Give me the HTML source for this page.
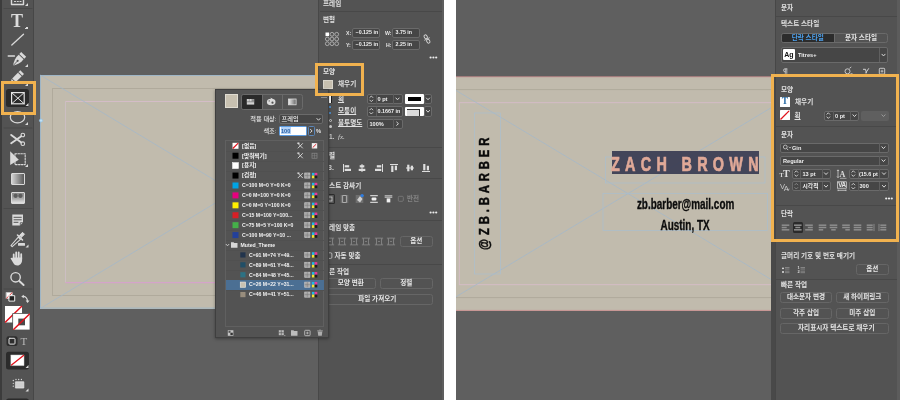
<!DOCTYPE html>
<html lang="ko"><head><meta charset="utf-8"><title>InDesign</title>
<style>
html,body{margin:0;padding:0;background:#fff;}
body{width:900px;height:400px;position:relative;overflow:hidden;font-family:"Liberation Sans","Noto Sans CJK KR",sans-serif;}
div{position:absolute;box-sizing:border-box;}
svg{position:absolute;overflow:visible;}
.t{white-space:nowrap;}
.pane{overflow:hidden;background:#5f5f5f;will-change:transform;}
.f{background:#464646;border:1px solid #6a6a6a;border-radius:2px;}
.btn{border:1px solid #666;border-radius:2.5px;background:#535353;color:#e6e6e6;font-size:6.6px;font-weight:700;text-align:center;}
.sep{height:1px;background:#484848;}
</style></head><body>

<div class="pane" style="left:0;top:0;width:444px;height:400px;">
<div style="left:40px;top:75px;width:388px;height:233.6px;background:#c1bbad;"></div>
<svg style="left:0;top:0" width="444" height="400" viewBox="0 0 444 400">
<rect x="52.5" y="88.5" width="363" height="207" fill="none" stroke="#b0aa9c" stroke-width="1"/>
<path d="M65.5 101.5V282.500M402.500 101.500V282.500" fill="none" stroke="#cdbec4" stroke-width="0.900"/><path d="M65.500 101.500H402.500" fill="none" stroke="#d6bcc9" stroke-width="0.900"/><path d="M65.500 282.700H402.500" fill="none" stroke="#db9ed0" stroke-width="1"/>
<rect x="40.5" y="75.5" width="387" height="232.6" fill="none" stroke="#9fb6c6" stroke-width="1"/>
<line x1="40" y1="75" x2="428" y2="308.6" stroke="#a0b8cd" stroke-width="0.7"/>
<line x1="40" y1="308.6" x2="428" y2="75" stroke="#a0b8cd" stroke-width="0.7"/>
<circle cx="41" cy="120.5" r="1.6" fill="#bfe0f5" stroke="#8fc3e8" stroke-width="0.6"/>
</svg>
<div style="left:0px;top:0px;width:34px;height:400px;background:#535353;border-left:2px solid #3c3c3c;border-right:1px solid #474747;"></div>
<svg id="tools" style="left:0;top:0" width="40" height="400" viewBox="0 0 40 400" fill="none" stroke="#dadada" stroke-width="1.3" stroke-linecap="round" stroke-linejoin="round">
<rect x="11.5" y="-4" width="12" height="8.5" stroke-width="1.4"/><path d="M14.5 1.5h1M17.3 1.5h1M20 1.5h1" stroke-width="1.2"/><path d="M28 3L28 6L25 6Z" fill="#dadada" stroke="none"/>
<line x1="4" y1="8.5" x2="32" y2="8.5" stroke="#494949" stroke-width="1"/>
<line x1="4" y1="128" x2="32" y2="128" stroke="#494949" stroke-width="1"/>
<line x1="4" y1="208.5" x2="32" y2="208.5" stroke="#494949" stroke-width="1"/>
<line x1="4" y1="289" x2="32" y2="289" stroke="#494949" stroke-width="1"/>
<line x1="11.8" y1="45" x2="23.5" y2="34.3" stroke-width="1.3"/>
<path d="M8.2 56h6.300" stroke-width="1.300"/><g transform="translate(18.200,60.200) rotate(43)"><rect x="-3.400" y="-8" width="6.800" height="2.700" fill="#dadada" stroke="none"/><path d="M-3.300 -4.300H3.300C4 0 2.200 4.300 0 7.600C-2.200 4.300 -4 0 -3.300 -4.300Z" fill="#dadada" stroke="none"/><path d="M0 7.600V1.500" stroke="#535353" stroke-width="0.800"/><circle cx="0" cy="0.800" r="1.050" fill="#535353" stroke="none"/></g><path d="M28 64L28 67L25 67Z" fill="#dadada" stroke="none"/>
<g transform="translate(16.500,77.800) rotate(45)"><rect x="-2.600" y="-8" width="5.200" height="11.500" fill="#dadada" stroke="none"/><path d="M-2.600 4.300h5.200L0 8.500z" fill="#dadada" stroke="none"/><rect x="-2.600" y="-5.600" width="5.200" height="0.900" fill="#535353" stroke="none"/></g><path d="M28 83L28 86L25 86Z" fill="#dadada" stroke="none"/>
</svg>
<div style="left:6px;top:88.5px;width:23px;height:18.5px;background:#2b2b2b;border-radius:2.5px;"></div>
<svg style="left:0;top:0" width="40" height="400" viewBox="0 0 40 400" fill="none" stroke="#e4e4e4" stroke-width="1.2">
<rect x="11.6" y="92.6" width="12.6" height="11.2"/><path d="M11.6 92.6l12.6 11.2M24.2 92.6l-12.6 11.2" stroke-width="1"/><path d="M28.5 103L28.5 106L25.5 106Z" fill="#dadada" stroke="none"/>
</svg>
<svg style="left:0;top:0" width="40" height="400" viewBox="0 0 40 400" fill="none" stroke="#dadada" stroke-width="1.3" stroke-linecap="round" stroke-linejoin="round">
<ellipse cx="17.5" cy="117.3" rx="7.2" ry="5.6" stroke-width="1.2"/><path d="M28 122L28 125L25 125Z" fill="#dadada" stroke="none"/>
<g transform="translate(17.5,139.5)"><path d="M-6.300 -4.600L3.800 3M-6.300 3.700L3.800 -3.300" stroke-width="1.900"/><circle cx="5.3" cy="-4.5" r="1.8" stroke-width="1.1"/><circle cx="5.3" cy="4.2" r="1.8" stroke-width="1.1"/></g>
<g><path d="M10.200 151.200V165L18.800 159.800Z" fill="#dadada" stroke="none"/><rect x="15" y="153.800" width="10.200" height="10.800" stroke-dasharray="1.600 1.300" stroke-width="1.100"/></g><path d="M28 164L28 167L25 167Z" fill="#dadada" stroke="none"/>
</svg>
<div style="left:11px;top:173px;width:13.5px;height:11.5px;background:linear-gradient(90deg,#d2d2d2,#5a5a5a);border:1px solid #dadada;border-radius:1px;"></div>
<div style="left:11px;top:192px;width:13.5px;height:12px;background:radial-gradient(circle at 30% 28%,#5c5c5c 0,#5c5c5c 1.6px,transparent 2.6px),radial-gradient(circle at 70% 28%,#5c5c5c 0,#5c5c5c 1.6px,transparent 2.6px),linear-gradient(180deg,#8a8a8a 0%,#a4a4a4 50%,#e2e2e2 100%);border:1px solid #dadada;border-radius:1px;"></div>
<svg style="left:0;top:0" width="40" height="400" viewBox="0 0 40 400" fill="none" stroke="#dadada" stroke-width="1.3" stroke-linecap="round" stroke-linejoin="round">
<path d="M12.3 214.5h10.7v8l-3 3h-7.7z" fill="#dadada" stroke="none"/><path d="M14 217.3h7.3M14 219.8h7.3M14 222.3h4" stroke="#535353" stroke-width="1"/><path d="M20.3 225.3v-2.6h2.6" stroke="#535353" stroke-width="0.8"/>
<g transform="translate(17.5,240)"><path d="M-6.5 5.5l7.3-8.3 2.2 2.2-8.3 7.3z" stroke-width="1.1"/><path d="M2 -4.5l3-3.2 2 2-3.2 3z" fill="#dadada" stroke-width="1"/><path d="M0 -5l5 5" stroke-width="1.6"/><rect x="0.5" y="3" width="7" height="2.8" rx="0.5" fill="#dadada" stroke="none"/></g><path d="M28.5 244.5L28.5 247.5L25.5 247.5Z" fill="#dadada" stroke="none"/>
<g transform="translate(17.5,259)"><path d="M-3.8 0v-4.6M-1.3 -0.5v-6M1.2 -0.5v-6M3.7 0v-4.8" stroke-width="1.8"/><path d="M-5 -1.5h9.6v2.5c0 3-2 5.5-4.6 5.5s-3.4-1-4.5-3l-2.5-4.200c1-1 2-0.500 2.600 0.300z" fill="#dadada" stroke="none"/></g>
<circle cx="15.6" cy="277.3" r="4.7" stroke-width="1.4"/><path d="M19.3 281l4.3 4" stroke-width="1.9"/>
<path d="M22.5 296.5c3-0.300 5 1.500 5 5" stroke-width="1.2"/><path d="M21.300 296.600l2.500-1.900v3.600z" fill="#dadada" stroke="none"/><path d="M27.600 303l-1.900-2.500h3.800z" fill="#dadada" stroke="none"/>
<rect x="6.3" y="292.500" width="6" height="6" fill="#fff" stroke="#ddd" stroke-width="0.5"/><path d="M6.500 298.300l5.600-5.600" stroke="#e02020" stroke-width="0.9"/><rect x="9.300" y="295.700" width="5.400" height="5.400" fill="#222" stroke="#eee" stroke-width="1"/>
<rect x="5" y="306" width="17" height="16.500" fill="#fff" stroke="none"/><path d="M5.500 322L21.500 306.500" stroke="#e0121c" stroke-width="1.500"/>
<rect x="13" y="313.500" width="17" height="16.500" fill="#fff" stroke="#535353" stroke-width="0.8"/><rect x="18.300" y="318.600" width="6.700" height="6.700" fill="#4a4a4a" stroke="none"/><path d="M13.800 329.300L29.300 314.300" stroke="#e0121c" stroke-width="1.500"/>
<rect x="6.500" y="336.300" width="11" height="9.800" rx="2" fill="#2d2d2d" stroke="none"/><rect x="9" y="338.300" width="6" height="5.800" rx="0.800" stroke="#e0e0e0" stroke-width="1"/>
<rect x="6" y="351.700" width="23" height="17.800" rx="2.500" fill="#2b2b2b" stroke="none"/><rect x="11" y="355" width="13" height="10.600" fill="#fff" stroke="#ccc" stroke-width="0.500"/><path d="M11.500 365L23.500 355.500" stroke="#e0121c" stroke-width="1.300"/><path d="M28.5 365L28.5 368L25.5 368Z" fill="#dadada" stroke="none"/>
<rect x="15.800" y="381.800" width="8" height="6.200" fill="#cfcfcf" stroke="#e6e6e6" stroke-width="0.800"/><path d="M13.300 380.500v0.010M13.300 383.300v0.010M13.300 386.200v0.010M16 379.500h0.010M18.700 379.500h0.010M21.400 379.500h0.010" stroke-width="1.300"/><path d="M28.5 388.5L28.5 391.5L25.5 391.5Z" fill="#dadada" stroke="none"/>
<rect x="6" y="398.500" width="23" height="6" rx="2.500" fill="#2b2b2b" stroke="none"/>
</svg>
<div class="t" style="left:11.1px;top:10.8px;font-size:18px;color:#dcdcdc;font-weight:700;line-height:20px;height:20px;white-space:nowrap;font-family:&quot;Liberation Serif&quot;,serif;">T</div>
<div style="left:25.3px;top:25.5px;width:3px;height:3px;background:linear-gradient(135deg,transparent 50%,#dadada 50%);"></div>
<div class="t" style="left:20.5px;top:334.5px;font-size:11px;color:#b9b9b9;font-weight:400;line-height:13px;height:13px;white-space:nowrap;font-family:&quot;Liberation Serif&quot;,serif;">T</div>
<div style="left:1px;top:81px;width:35px;height:33.5px;border:3px solid #f1b24f;"></div>
<div style="left:318px;top:0px;width:126px;height:400px;background:#535353;border-left:1px solid #484848;border-right:2px solid #5e5e5e;"></div>
<div class="t" style="left:323px;top:-1.5px;font-size:6.6px;color:#e2e2e2;font-weight:700;line-height:10px;height:10px;white-space:nowrap;">프레임</div>
<div class="sep" style="left:320px;top:11.2px;width:122px;height:1px;"></div>
<div class="t" style="left:323px;top:14.5px;font-size:6.6px;color:#e2e2e2;font-weight:700;line-height:10px;height:10px;white-space:nowrap;">변형</div>
<svg style="left:0;top:0" width="444" height="400" viewBox="0 0 444 400" ><rect x="325.5" y="32.5" width="3.6" height="3.6" fill="#fff"/><circle cx="332.0" cy="34.3" r="1.9" fill="none" stroke="#bcbcbc" stroke-width="0.8"/><circle cx="336.7" cy="34.3" r="1.9" fill="none" stroke="#bcbcbc" stroke-width="0.8"/><circle cx="327.3" cy="39.0" r="1.9" fill="none" stroke="#bcbcbc" stroke-width="0.8"/><circle cx="332.0" cy="39.0" r="1.9" fill="none" stroke="#bcbcbc" stroke-width="0.8"/><circle cx="336.7" cy="39.0" r="1.9" fill="none" stroke="#bcbcbc" stroke-width="0.8"/><circle cx="327.3" cy="43.699999999999996" r="1.9" fill="none" stroke="#bcbcbc" stroke-width="0.8"/><circle cx="332.0" cy="43.699999999999996" r="1.9" fill="none" stroke="#bcbcbc" stroke-width="0.8"/><circle cx="336.7" cy="43.699999999999996" r="1.9" fill="none" stroke="#bcbcbc" stroke-width="0.8"/></svg>
<div class="t" style="left:346px;top:27.5px;font-size:5.2px;color:#e4e4e4;font-weight:700;line-height:10px;height:10px;white-space:nowrap;">X:</div>
<div class="f" style="left:352px;top:28px;width:27.5px;height:9.5px;"><div class="t" style="left:2.6px;top:-1px;height:9.5px;line-height:9.5px;font-size:5.3px;font-weight:700;color:#f0f0f0;">−0.125 in</div></div>
<div class="t" style="left:385px;top:27.5px;font-size:5.2px;color:#e4e4e4;font-weight:700;line-height:10px;height:10px;white-space:nowrap;">W:</div>
<div class="f" style="left:392px;top:28px;width:27.5px;height:9.5px;"><div class="t" style="left:2.6px;top:-1px;height:9.5px;line-height:9.5px;font-size:5.3px;font-weight:700;color:#f0f0f0;">3.75 in</div></div>
<div class="t" style="left:346px;top:39.5px;font-size:5.2px;color:#e4e4e4;font-weight:700;line-height:10px;height:10px;white-space:nowrap;">Y:</div>
<div class="f" style="left:352px;top:40px;width:27.5px;height:9.5px;"><div class="t" style="left:2.6px;top:-1px;height:9.5px;line-height:9.5px;font-size:5.3px;font-weight:700;color:#f0f0f0;">−0.125 in</div></div>
<div class="t" style="left:386px;top:39.5px;font-size:5.2px;color:#e4e4e4;font-weight:700;line-height:10px;height:10px;white-space:nowrap;">H:</div>
<div class="f" style="left:392px;top:40px;width:27.5px;height:9.5px;"><div class="t" style="left:2.6px;top:-1px;height:9.5px;line-height:9.5px;font-size:5.3px;font-weight:700;color:#f0f0f0;">2.25 in</div></div>
<svg style="left:0;top:0" width="444" height="400" viewBox="0 0 444 400" ><g transform="translate(427,39) rotate(-30)" fill="none" stroke="#d8d8d8" stroke-width="0.9"><rect x="-1.4" y="-4.6" width="2.8" height="4" rx="1.4"/><rect x="-1.4" y="0.6" width="2.8" height="4" rx="1.4"/><path d="M-3 -0.2l6 0.4" stroke-width="0.8"/></g></svg>
<svg style="left:0;top:0" width="444" height="400" viewBox="0 0 444 400" ><circle cx="430.6" cy="57.5" r="1.1" fill="#ececec"/><circle cx="433.40000000000003" cy="57.5" r="1.1" fill="#ececec"/><circle cx="436.20000000000005" cy="57.5" r="1.1" fill="#ececec"/></svg>
<div class="t" style="left:323px;top:66.5px;font-size:6.6px;color:#e2e2e2;font-weight:700;line-height:10px;height:10px;white-space:nowrap;">모양</div>
<div style="left:323px;top:80px;width:9.5px;height:9px;background:#c6bfaf;border:1px solid #d9d5cb;"></div>
<div class="t" style="left:338px;top:79.2px;font-size:6.6px;color:#e2e2e2;font-weight:700;line-height:10px;height:10px;white-space:nowrap;">채우기</div>
<div style="left:327px;top:93.8px;width:4.6px;height:9.6px;background:#fff;border-right:1.400px solid #1c1c1c;"></div>
<div class="t" style="left:338px;top:93.8px;font-size:6.6px;color:#e2e2e2;font-weight:700;line-height:10px;height:10px;white-space:nowrap;text-decoration:underline;text-decoration-thickness:0.6px;text-underline-offset:1.3px;">획</div>
<div class="f" style="left:367px;top:93.5px;width:35.5px;height:10.5px;"></div>
<div style="left:375.5px;top:94px;width:1px;height:9.5px;background:#5e5e5e;"></div>
<div style="left:392.5px;top:94px;width:1px;height:9.5px;background:#5e5e5e;"></div>
<div class="t" style="left:377.5px;top:93.7px;font-size:5.6px;color:#f0f0f0;font-weight:700;line-height:10px;height:10px;white-space:nowrap;">0 pt</div>
<div style="left:405px;top:94px;width:18.5px;height:9.5px;background:#fff;border-radius:1px;"></div>
<div style="left:408px;top:97.2px;width:12.5px;height:3.4px;background:#000;"></div>
<div class="f" style="left:424px;top:93.5px;width:8px;height:10.5px;"></div>
<div style="left:328.7px;top:105.8px;width:2.6px;height:2.6px;background:#4d98e4;border-radius:50%;"></div>
<div style="left:328.7px;top:111.5px;width:2.6px;height:2.6px;background:#4d98e4;border-radius:50%;"></div>
<div class="t" style="left:338px;top:106px;font-size:6.6px;color:#e2e2e2;font-weight:700;line-height:10px;height:10px;white-space:nowrap;text-decoration:underline;text-decoration-thickness:0.6px;text-underline-offset:1.3px;">모퉁이</div>
<div class="f" style="left:367px;top:106px;width:35.5px;height:10.5px;"></div>
<div style="left:375.5px;top:106.5px;width:1px;height:9.5px;background:#5e5e5e;"></div>
<div class="t" style="left:377.5px;top:106.2px;font-size:5.4px;color:#f0f0f0;font-weight:700;line-height:10px;height:10px;white-space:nowrap;">0.1667 in</div>
<div style="left:405px;top:106.5px;width:18.5px;height:9.5px;background:#fff;border-radius:1px;"></div>
<div style="left:407px;top:108.5px;width:13px;height:7.5px;background:#dcdcdc;border-top:1px solid #333;border-right:1.3px solid #333;"></div>
<div class="f" style="left:424px;top:106px;width:8px;height:10.5px;"></div>
<div style="left:328.5px;top:119.3px;width:3px;height:3px;border:0.800px solid #cfcfcf;border-radius:50%;"></div>
<div style="left:328.5px;top:124.6px;width:3px;height:3px;background:#cfcfcf;border-radius:50%;"></div>
<div class="t" style="left:338px;top:118.4px;font-size:6.6px;color:#e2e2e2;font-weight:700;line-height:10px;height:10px;white-space:nowrap;text-decoration:underline;text-decoration-thickness:0.6px;text-underline-offset:1.3px;">불투명도</div>
<div class="f" style="left:367px;top:118.5px;width:35.5px;height:10.5px;"></div>
<div style="left:392.5px;top:119px;width:1px;height:9.5px;background:#5e5e5e;"></div>
<div class="t" style="left:369.5px;top:118.7px;font-size:5.6px;color:#f0f0f0;font-weight:700;line-height:10px;height:10px;white-space:nowrap;">100%</div>
<div class="t" style="left:338px;top:131.5px;font-size:7px;color:#d4d4d4;font-weight:400;line-height:10px;height:10px;white-space:nowrap;font-style:italic;font-family:&quot;Liberation Serif&quot;,serif;">fx.</div>
<div class="t" style="left:329px;top:131.5px;font-size:6.5px;color:#cfcfcf;font-weight:700;line-height:10px;height:10px;white-space:nowrap;">1.</div>
<svg style="left:0;top:0" width="444" height="400" viewBox="0 0 444 400" ><path d="M369.8 97.5L371.3 96.0L372.8 97.5M369.8 100.1L371.3 101.6L372.8 100.1" fill="none" stroke="#d8d8d8" stroke-width="0.9" stroke-linecap="round" stroke-linejoin="round"/><path d="M395.9 98.0L397.5 99.75999999999999L399.1 98.0" fill="none" stroke="#d8d8d8" stroke-width="1" stroke-linecap="round" stroke-linejoin="round"/><path d="M426.4 98.0L428 99.75999999999999L429.6 98.0" fill="none" stroke="#d8d8d8" stroke-width="1" stroke-linecap="round" stroke-linejoin="round"/><path d="M369.8 109.9L371.3 108.4L372.8 109.9M369.8 112.5L371.3 114.0L372.8 112.5" fill="none" stroke="#d8d8d8" stroke-width="0.9" stroke-linecap="round" stroke-linejoin="round"/><path d="M426.4 110.4L428 112.16L429.6 110.4" fill="none" stroke="#d8d8d8" stroke-width="1" stroke-linecap="round" stroke-linejoin="round"/><path d="M396.7 122.10000000000001L398.46 123.7L396.7 125.3" fill="none" stroke="#d8d8d8" stroke-width="1" stroke-linecap="round" stroke-linejoin="round"/></svg>
<div class="sep" style="left:320px;top:146.5px;width:122px;height:1px;"></div>
<div class="t" style="left:323px;top:150.5px;font-size:6.6px;color:#e2e2e2;font-weight:700;line-height:10px;height:10px;white-space:nowrap;">정렬</div>
<svg style="left:0;top:0" width="444" height="400" viewBox="0 0 444 400" ><path d="M343.5 164v8" stroke="#dedede" stroke-width="1"/><rect x="344.7" y="165.2" width="4.5" height="2.2" fill="#dedede"/><rect x="344.7" y="168.8" width="6.3" height="2.2" fill="#dedede"/><path d="M362 164v8" stroke="#dedede" stroke-width="1"/><rect x="359.7" y="165.2" width="4.6" height="2.2" fill="#dedede"/><rect x="358.7" y="168.8" width="6.6" height="2.2" fill="#dedede"/><path d="M382.5 164v8" stroke="#dedede" stroke-width="1"/><rect x="376.8" y="165.2" width="4.5" height="2.2" fill="#dedede"/><rect x="375" y="168.8" width="6.3" height="2.2" fill="#dedede"/><path d="M390 164.5h8" stroke="#dedede" stroke-width="1"/><rect x="391.2" y="165.7" width="2.2" height="6.3" fill="#dedede"/><rect x="394.8" y="165.7" width="2.2" height="4.5" fill="#dedede"/><path d="M406 168h8" stroke="#dedede" stroke-width="1"/><rect x="407.2" y="164.7" width="2.2" height="6.6" fill="#dedede"/><rect x="410.8" y="165.7" width="2.2" height="4.6" fill="#dedede"/><path d="M422 171.5h8" stroke="#dedede" stroke-width="1"/><rect x="423.2" y="164" width="2.2" height="6.3" fill="#dedede"/><rect x="426.8" y="165.8" width="2.2" height="4.5" fill="#dedede"/></svg>
<div class="t" style="left:328px;top:162.5px;font-size:7px;color:#d8d8d8;font-weight:700;line-height:10px;height:10px;white-space:nowrap;">3.</div>
<div class="sep" style="left:320px;top:177.5px;width:122px;height:1px;"></div>
<div class="t" style="left:323px;top:180.5px;font-size:6.6px;color:#e2e2e2;font-weight:700;line-height:10px;height:10px;white-space:nowrap;">텍스트 감싸기</div>
<div style="left:324px;top:194px;width:10.5px;height:10px;background:#2c2c2c;border-radius:1.5px;"></div>
<svg style="left:0;top:0" width="444" height="400" viewBox="0 0 444 400" ><path d="M326.2 196h7.6" stroke="#9a9a9a" stroke-width="0.8"/><path d="M326.2 198h7.6" stroke="#9a9a9a" stroke-width="0.8"/><path d="M326.2 200h7.6" stroke="#9a9a9a" stroke-width="0.8"/><path d="M326.2 202h7.6" stroke="#9a9a9a" stroke-width="0.8"/><rect x="328" y="197" width="4" height="4" fill="none" stroke="#cfcfcf" stroke-width="0.8"/><path d="M340.7 196h7.6" stroke="#9a9a9a" stroke-width="0.8"/><path d="M340.7 198h7.6" stroke="#9a9a9a" stroke-width="0.8"/><path d="M340.7 200h7.6" stroke="#9a9a9a" stroke-width="0.8"/><path d="M340.7 202h7.6" stroke="#9a9a9a" stroke-width="0.8"/><rect x="342.7" y="195.6" width="3.6" height="6.8" fill="#535353" stroke="#bdbdbd" stroke-width="0.8"/><path d="M355.7 196h7.6" stroke="#9a9a9a" stroke-width="0.8"/><path d="M355.7 198h7.6" stroke="#9a9a9a" stroke-width="0.8"/><path d="M355.7 200h7.6" stroke="#9a9a9a" stroke-width="0.8"/><path d="M355.7 202h7.6" stroke="#9a9a9a" stroke-width="0.8"/><path d="M357.0 200l3-4 2.5 3-2.5 3.5z" fill="#cfcfcf"/><circle cx="362.1" cy="195.6" r="1.7" fill="#2f7de1"/><path d="M370.2 195.6h7.6M370.2 202.4h7.6" stroke="#cfcfcf" stroke-width="1.1"/><rect x="371.6" y="197.4" width="4.8" height="3.2" rx="1" fill="#f0f0f0"/><path d="M384.7 195.8h7.6M384.7 197.2h7.6" stroke="#cfcfcf" stroke-width="1"/><rect x="386.7" y="198.4" width="3.6" height="4" fill="#f0f0f0"/><rect x="398.3" y="196.3" width="5" height="5" rx="1" fill="none" stroke="#7c7c7c" stroke-width="0.8"/><circle cx="430.6" cy="212.5" r="1.1" fill="#ececec"/><circle cx="433.40000000000003" cy="212.5" r="1.1" fill="#ececec"/><circle cx="436.20000000000005" cy="212.5" r="1.1" fill="#ececec"/></svg>
<div class="t" style="left:407px;top:194px;font-size:6.6px;color:#858585;font-weight:700;line-height:10px;height:10px;white-space:nowrap;">반전</div>
<div class="sep" style="left:320px;top:219.8px;width:122px;height:1px;"></div>
<div class="t" style="left:323px;top:223px;font-size:6.6px;color:#e2e2e2;font-weight:700;line-height:10px;height:10px;white-space:nowrap;">프레임 맞춤</div>
<svg style="left:0;top:0" width="444" height="400" viewBox="0 0 444 400" ><rect x="327.6" y="238.1" width="4.8" height="6.8" fill="none" stroke="#8d8d8d" stroke-width="0.8"/><path d="M326.4 237.5v1.8M333.6 237.5v1.8M326.4 243.7v1.8M333.6 243.7v1.8" stroke="#858585" stroke-width="0.7"/><path d="M329 241.5h2" stroke="#8d8d8d" stroke-width="0.7"/><rect x="339.6" y="238.1" width="4.8" height="6.8" fill="none" stroke="#8d8d8d" stroke-width="0.8"/><path d="M338.4 237.5v1.8M345.6 237.5v1.8M338.4 243.7v1.8M345.6 243.7v1.8" stroke="#858585" stroke-width="0.7"/><path d="M341 241.5h2" stroke="#8d8d8d" stroke-width="0.7"/><rect x="351.6" y="238.1" width="4.8" height="6.8" fill="none" stroke="#8d8d8d" stroke-width="0.8"/><path d="M350.4 237.5v1.8M357.6 237.5v1.8M350.4 243.7v1.8M357.6 243.7v1.8" stroke="#858585" stroke-width="0.7"/><path d="M353 241.5h2" stroke="#8d8d8d" stroke-width="0.7"/><rect x="363.6" y="238.1" width="4.8" height="6.8" fill="none" stroke="#8d8d8d" stroke-width="0.8"/><path d="M362.4 237.5v1.8M369.6 237.5v1.8M362.4 243.7v1.8M369.6 243.7v1.8" stroke="#858585" stroke-width="0.7"/><path d="M365 241.5h2" stroke="#8d8d8d" stroke-width="0.7"/><rect x="376.6" y="238.1" width="4.8" height="6.8" fill="none" stroke="#8d8d8d" stroke-width="0.8"/><path d="M375.4 237.5v1.8M382.6 237.5v1.8M375.4 243.7v1.8M382.6 243.7v1.8" stroke="#858585" stroke-width="0.7"/><path d="M378 241.5h2" stroke="#8d8d8d" stroke-width="0.7"/><rect x="388.6" y="238.1" width="4.8" height="6.8" fill="none" stroke="#8d8d8d" stroke-width="0.8"/><path d="M387.4 237.5v1.8M394.6 237.5v1.8M387.4 243.7v1.8M394.6 243.7v1.8" stroke="#858585" stroke-width="0.7"/><path d="M390 241.5h2" stroke="#8d8d8d" stroke-width="0.7"/><rect x="326.3" y="252.8" width="5.6" height="5.6" rx="1.2" fill="none" stroke="#cfcfcf" stroke-width="0.8"/></svg>
<div class="btn" style="left:400px;top:236px;width:32.5px;height:10.5px;line-height:8.3px;">옵션</div>
<div class="t" style="left:334.5px;top:250.7px;font-size:6.6px;color:#e2e2e2;font-weight:700;line-height:10px;height:10px;white-space:nowrap;">자동 맞춤</div>
<div class="sep" style="left:320px;top:264.4px;width:122px;height:1px;"></div>
<div class="t" style="left:323px;top:266.7px;font-size:6.6px;color:#e2e2e2;font-weight:700;line-height:10px;height:10px;white-space:nowrap;">빠른 작업</div>
<div class="btn" style="left:326px;top:278.3px;width:49.5px;height:10.7px;line-height:8.5px;">모양 변환</div>
<div class="btn" style="left:380px;top:278.3px;width:52.5px;height:10.7px;line-height:8.5px;">정렬</div>
<div class="btn" style="padding-right:4px;left:326px;top:294px;width:106.5px;height:10.5px;line-height:8.3px;">파일 가져오기</div>
<div style="left:215px;top:89.3px;width:113.5px;height:249.2px;background:#535353;border:1px solid #3f3f3f;box-shadow:0 1px 3px rgba(0,0,0,0.35);"></div>
<div style="left:225px;top:94.2px;width:13.3px;height:13.6px;background:#c8c1b1;border:1px solid #e0dcd2;"></div>
<div style="left:241px;top:94px;width:62px;height:15.5px;border:1px solid #6a6a6a;border-radius:2.5px;background:#535353;overflow:hidden;"><div style="left:0;top:0;width:19.5px;height:14px;background:#2a2a2a;"></div><div style="left:19.5px;top:0;width:1px;height:14px;background:#6a6a6a;"></div><div style="left:40px;top:0;width:1px;height:14px;background:#6a6a6a;"></div></div>
<svg style="left:0;top:0" width="444" height="400" viewBox="0 0 444 400" ><g transform="translate(-0.8,-0.3)"><rect x="247.600" y="99.300" width="7.400" height="5.600" fill="#d2d2d2"/><path d="M247.600 102.100h7.400" stroke="#5a5a5a" stroke-width="0.600"/><path d="M250.100 99.300v2.800M252.600 99.300v2.800" stroke="#7a7a7a" stroke-width="0.500"/><rect x="252.800" y="99.500" width="2" height="2.400" fill="#8a8a8a"/><ellipse cx="272" cy="102.3" rx="4.300" ry="3.300" fill="#dcdcdc"/><circle cx="273.300" cy="103" r="1.100" fill="#535353"/><circle cx="270" cy="101.200" r="0.600" fill="#535353"/><path d="M271.500 98.500l2.500 1.500" stroke="#dcdcdc" stroke-width="1"/><defs><linearGradient id="gr1" x1="0" x2="1" y1="0" y2="0"><stop offset="0" stop-color="#eee"/><stop offset="1" stop-color="#666"/></linearGradient></defs><rect x="289.300" y="99.300" width="7.600" height="5.800" fill="url(#gr1)" stroke="#dcdcdc" stroke-width="0.800"/></g></svg>
<div class="t" style="left:226px;top:114px;font-size:6.2px;color:#e8e8e8;font-weight:500;line-height:10px;height:10px;white-space:nowrap;width:50.5px;text-align:right;">적용 대상:</div>
<div class="f" style="left:279px;top:114.3px;width:44px;height:10px;"></div>
<div class="t" style="left:281.5px;top:113.8px;font-size:6.2px;color:#f0f0f0;font-weight:500;line-height:10px;height:10px;white-space:nowrap;">프레임</div>
<div class="t" style="left:226px;top:125.8px;font-size:6.2px;color:#e8e8e8;font-weight:500;line-height:10px;height:10px;white-space:nowrap;width:50.5px;text-align:right;">색조:</div>
<div style="left:279px;top:126px;width:28px;height:9.8px;background:#fff;border:1px solid #5b9be0;border-radius:1.5px;"></div>
<div style="left:280.5px;top:127.3px;width:10.5px;height:7.2px;background:#b5d3f7;"></div>
<div class="t" style="left:281px;top:125.9px;font-size:5.6px;color:#2b62a6;font-weight:700;line-height:10px;height:10px;white-space:nowrap;">100</div>
<div style="left:307.5px;top:126px;width:7.5px;height:9.8px;background:#4a4a4a;border:1px solid #5b86b8;border-radius:1.5px;"></div>
<div class="t" style="left:316px;top:125.8px;font-size:5.8px;color:#e2e2e2;font-weight:700;line-height:10px;height:10px;white-space:nowrap;">%</div>
<svg style="left:0;top:0" width="444" height="400" viewBox="0 0 444 400" ><path d="M316.9 118.5L318.5 120.25999999999999L320.1 118.5" fill="none" stroke="#d8d8d8" stroke-width="1" stroke-linecap="round" stroke-linejoin="round"/><path d="M310.45 129.4L312.09999999999997 130.9L310.45 132.4" fill="none" stroke="#d8d8d8" stroke-width="1" stroke-linecap="round" stroke-linejoin="round"/></svg>
<div style="left:224.7px;top:140.3px;width:99.5px;height:187px;border:1px solid #606060;background:#535353;"></div>
<div class="t" style="left:242px;top:140.60000000000002px;font-size:5.7px;color:#f2f2f2;font-weight:700;line-height:10px;height:10px;white-space:nowrap;">[없음]</div>
<div style="left:225.5px;top:150.72px;width:98px;height:1px;background:#505050;"></div>
<div class="t" style="left:242px;top:150.52px;font-size:5.7px;color:#f2f2f2;font-weight:700;line-height:10px;height:10px;white-space:nowrap;">[맞춰찍기]</div>
<div style="left:225.5px;top:160.64000000000001px;width:98px;height:1px;background:#505050;"></div>
<div class="t" style="left:242px;top:160.44000000000003px;font-size:5.7px;color:#f2f2f2;font-weight:700;line-height:10px;height:10px;white-space:nowrap;">[용지]</div>
<div style="left:225.5px;top:170.56px;width:98px;height:1px;background:#505050;"></div>
<div class="t" style="left:242px;top:170.36px;font-size:5.7px;color:#f2f2f2;font-weight:700;line-height:10px;height:10px;white-space:nowrap;">[검정]</div>
<div style="left:225.5px;top:180.48000000000002px;width:98px;height:1px;background:#505050;"></div>
<div class="t" style="left:242px;top:180.28000000000003px;font-size:5.15px;color:#f2f2f2;font-weight:700;line-height:10px;height:10px;white-space:nowrap;">C=100 M=0 Y=0 K=0</div>
<div style="left:225.5px;top:190.4px;width:98px;height:1px;background:#505050;"></div>
<div class="t" style="left:242px;top:190.20000000000002px;font-size:5.15px;color:#f2f2f2;font-weight:700;line-height:10px;height:10px;white-space:nowrap;">C=0 M=100 Y=0 K=0</div>
<div style="left:225.5px;top:200.32px;width:98px;height:1px;background:#505050;"></div>
<div class="t" style="left:242px;top:200.12px;font-size:5.15px;color:#f2f2f2;font-weight:700;line-height:10px;height:10px;white-space:nowrap;">C=0 M=0 Y=100 K=0</div>
<div style="left:225.5px;top:210.24px;width:98px;height:1px;background:#505050;"></div>
<div class="t" style="left:242px;top:210.04000000000002px;font-size:5.15px;color:#f2f2f2;font-weight:700;line-height:10px;height:10px;white-space:nowrap;">C=15 M=100 Y=100...</div>
<div style="left:225.5px;top:220.16000000000003px;width:98px;height:1px;background:#505050;"></div>
<div class="t" style="left:242px;top:219.96000000000004px;font-size:5.15px;color:#f2f2f2;font-weight:700;line-height:10px;height:10px;white-space:nowrap;">C=75 M=5 Y=100 K=0</div>
<div style="left:225.5px;top:230.08px;width:98px;height:1px;background:#505050;"></div>
<div class="t" style="left:242px;top:229.88000000000002px;font-size:5.15px;color:#f2f2f2;font-weight:700;line-height:10px;height:10px;white-space:nowrap;">C=100 M=90 Y=10 ...</div>
<div style="left:225.5px;top:240.0px;width:98px;height:1px;background:#505050;"></div>
<div class="t" style="left:240.5px;top:239.8px;font-size:5.15px;color:#f2f2f2;font-weight:700;line-height:10px;height:10px;white-space:nowrap;">Muted_Theme</div>
<div style="left:225.5px;top:249.92000000000002px;width:98px;height:1px;background:#505050;"></div>
<div class="t" style="left:249px;top:249.72000000000003px;font-size:5.15px;color:#f2f2f2;font-weight:700;line-height:10px;height:10px;white-space:nowrap;">C=91 M=74 Y=49...</div>
<div style="left:225.5px;top:259.84000000000003px;width:98px;height:1px;background:#505050;"></div>
<div class="t" style="left:249px;top:259.64000000000004px;font-size:5.15px;color:#f2f2f2;font-weight:700;line-height:10px;height:10px;white-space:nowrap;">C=89 M=61 Y=48...</div>
<div style="left:225.5px;top:269.76px;width:98px;height:1px;background:#505050;"></div>
<div class="t" style="left:249px;top:269.56px;font-size:5.15px;color:#f2f2f2;font-weight:700;line-height:10px;height:10px;white-space:nowrap;">C=84 M=48 Y=45...</div>
<div style="left:225.5px;top:279.78000000000003px;width:98px;height:9.9px;background:#4b6f93;"></div>
<div class="t" style="left:249px;top:279.48px;font-size:5.15px;color:#f2f2f2;font-weight:700;line-height:10px;height:10px;white-space:nowrap;">C=26 M=22 Y=31...</div>
<div style="left:225.5px;top:289.6px;width:98px;height:1px;background:#505050;"></div>
<div class="t" style="left:249px;top:289.40000000000003px;font-size:5.15px;color:#f2f2f2;font-weight:700;line-height:10px;height:10px;white-space:nowrap;">C=46 M=41 Y=51...</div>
<svg style="left:0;top:0" width="444" height="400" viewBox="0 0 444 400" ><rect x="232.5" y="142.8" width="6" height="6" fill="#fff"/><path d="M232.8 148.5l5.400-5.400" stroke="#e0121c" stroke-width="1.200"/><path d="M297.8 143.3l5 5M302.8 143.3l-5 5" stroke="#dcdcdc" stroke-width="0.900"/><path d="M297.5 143.0l2 0.500" stroke="#dcdcdc" stroke-width="1.300"/><rect x="311.8" y="143.10000000000002" width="5.400" height="5.400" fill="#f2f2f2"/><path d="M312.7 147.60000000000002l3.600-3.600" stroke="#e0121c" stroke-width="0.900"/><rect x="232.5" y="152.72" width="6" height="6" fill="#000" stroke="none" stroke-width="0.600"/><path d="M297.8 153.22l5 5M302.8 153.22l-5 5" stroke="#dcdcdc" stroke-width="0.900"/><path d="M297.5 152.92l2 0.500" stroke="#dcdcdc" stroke-width="1.300"/><rect x="312.0" y="153.22" width="5" height="5" fill="none" stroke="#8a8a8a" stroke-width="0.700"/><path d="M312.0 155.72h5M314.500 153.22v5" stroke="#8a8a8a" stroke-width="0.500"/><rect x="232.5" y="162.64000000000001" width="6" height="6" fill="#fff" stroke="#eee" stroke-width="0.600"/><rect x="232.5" y="172.56" width="6" height="6" fill="#000" stroke="none" stroke-width="0.600"/><path d="M297.8 173.06l5 5M302.8 173.06l-5 5" stroke="#dcdcdc" stroke-width="0.900"/><path d="M297.5 172.76l2 0.500" stroke="#dcdcdc" stroke-width="1.300"/><rect x="304.7" y="172.96" width="5.200" height="5.200" fill="#a9a9a9" stroke="#c9c9c9" stroke-width="0.600"/><path d="M304.7 175.56h5.200M307.3 172.96v5.200" stroke="#777" stroke-width="0.500"/><rect x="311.90000000000003" y="172.86" width="2.700" height="2.700" fill="#20b8e8"/><rect x="314.6" y="172.86" width="2.700" height="2.700" fill="#e83a9c"/><rect x="311.90000000000003" y="175.56" width="2.700" height="2.700" fill="#f2e530"/><rect x="314.6" y="175.56" width="2.700" height="2.700" fill="#222"/><rect x="232.5" y="182.48000000000002" width="6" height="6" fill="#00a4e4" stroke="none" stroke-width="0.600"/><rect x="304.7" y="182.88000000000002" width="5.200" height="5.200" fill="#a9a9a9" stroke="#c9c9c9" stroke-width="0.600"/><path d="M304.7 185.48000000000002h5.200M307.3 182.88000000000002v5.200" stroke="#777" stroke-width="0.500"/><rect x="311.90000000000003" y="182.78000000000003" width="2.700" height="2.700" fill="#20b8e8"/><rect x="314.6" y="182.78000000000003" width="2.700" height="2.700" fill="#e83a9c"/><rect x="311.90000000000003" y="185.48000000000002" width="2.700" height="2.700" fill="#f2e530"/><rect x="314.6" y="185.48000000000002" width="2.700" height="2.700" fill="#222"/><rect x="232.5" y="192.4" width="6" height="6" fill="#e6007e" stroke="none" stroke-width="0.600"/><rect x="304.7" y="192.8" width="5.200" height="5.200" fill="#a9a9a9" stroke="#c9c9c9" stroke-width="0.600"/><path d="M304.7 195.4h5.200M307.3 192.8v5.200" stroke="#777" stroke-width="0.500"/><rect x="311.90000000000003" y="192.70000000000002" width="2.700" height="2.700" fill="#20b8e8"/><rect x="314.6" y="192.70000000000002" width="2.700" height="2.700" fill="#e83a9c"/><rect x="311.90000000000003" y="195.4" width="2.700" height="2.700" fill="#f2e530"/><rect x="314.6" y="195.4" width="2.700" height="2.700" fill="#222"/><rect x="232.5" y="202.32" width="6" height="6" fill="#fff100" stroke="none" stroke-width="0.600"/><rect x="304.7" y="202.72" width="5.200" height="5.200" fill="#a9a9a9" stroke="#c9c9c9" stroke-width="0.600"/><path d="M304.7 205.32h5.200M307.3 202.72v5.200" stroke="#777" stroke-width="0.500"/><rect x="311.90000000000003" y="202.62" width="2.700" height="2.700" fill="#20b8e8"/><rect x="314.6" y="202.62" width="2.700" height="2.700" fill="#e83a9c"/><rect x="311.90000000000003" y="205.32" width="2.700" height="2.700" fill="#f2e530"/><rect x="314.6" y="205.32" width="2.700" height="2.700" fill="#222"/><rect x="232.5" y="212.24" width="6" height="6" fill="#d71f26" stroke="none" stroke-width="0.600"/><rect x="304.7" y="212.64000000000001" width="5.200" height="5.200" fill="#a9a9a9" stroke="#c9c9c9" stroke-width="0.600"/><path d="M304.7 215.24h5.200M307.3 212.64000000000001v5.200" stroke="#777" stroke-width="0.500"/><rect x="311.90000000000003" y="212.54000000000002" width="2.700" height="2.700" fill="#20b8e8"/><rect x="314.6" y="212.54000000000002" width="2.700" height="2.700" fill="#e83a9c"/><rect x="311.90000000000003" y="215.24" width="2.700" height="2.700" fill="#f2e530"/><rect x="314.6" y="215.24" width="2.700" height="2.700" fill="#222"/><rect x="232.5" y="222.16000000000003" width="6" height="6" fill="#45b049" stroke="none" stroke-width="0.600"/><rect x="304.7" y="222.56000000000003" width="5.200" height="5.200" fill="#a9a9a9" stroke="#c9c9c9" stroke-width="0.600"/><path d="M304.7 225.16000000000003h5.200M307.3 222.56000000000003v5.200" stroke="#777" stroke-width="0.500"/><rect x="311.90000000000003" y="222.46000000000004" width="2.700" height="2.700" fill="#20b8e8"/><rect x="314.6" y="222.46000000000004" width="2.700" height="2.700" fill="#e83a9c"/><rect x="311.90000000000003" y="225.16000000000003" width="2.700" height="2.700" fill="#f2e530"/><rect x="314.6" y="225.16000000000003" width="2.700" height="2.700" fill="#222"/><rect x="232.5" y="232.08" width="6" height="6" fill="#23409a" stroke="none" stroke-width="0.600"/><rect x="304.7" y="232.48000000000002" width="5.200" height="5.200" fill="#a9a9a9" stroke="#c9c9c9" stroke-width="0.600"/><path d="M304.7 235.08h5.200M307.3 232.48000000000002v5.200" stroke="#777" stroke-width="0.500"/><rect x="311.90000000000003" y="232.38000000000002" width="2.700" height="2.700" fill="#20b8e8"/><rect x="314.6" y="232.38000000000002" width="2.700" height="2.700" fill="#e83a9c"/><rect x="311.90000000000003" y="235.08" width="2.700" height="2.700" fill="#f2e530"/><rect x="314.6" y="235.08" width="2.700" height="2.700" fill="#222"/><path d="M226.1 244.3L227.5 245.84L228.9 244.3" fill="none" stroke="#cfcfcf" stroke-width="0.9" stroke-linecap="round" stroke-linejoin="round"/><path d="M231 242.2h2.500l0.800 0.900h3.200v4.700h-6.500z" fill="#d6d6d6"/><rect x="240.3" y="252.32000000000002" width="5.2" height="5.2" fill="#22344c" stroke="none" stroke-width="0.700"/><rect x="304.7" y="252.32000000000002" width="5.200" height="5.200" fill="#a9a9a9" stroke="#c9c9c9" stroke-width="0.600"/><path d="M304.7 254.92000000000002h5.200M307.3 252.32000000000002v5.200" stroke="#777" stroke-width="0.500"/><rect x="311.90000000000003" y="252.22000000000003" width="2.700" height="2.700" fill="#20b8e8"/><rect x="314.6" y="252.22000000000003" width="2.700" height="2.700" fill="#e83a9c"/><rect x="311.90000000000003" y="254.92000000000002" width="2.700" height="2.700" fill="#f2e530"/><rect x="314.6" y="254.92000000000002" width="2.700" height="2.700" fill="#222"/><rect x="240.3" y="262.24" width="5.2" height="5.2" fill="#214e66" stroke="none" stroke-width="0.700"/><rect x="304.7" y="262.24" width="5.200" height="5.200" fill="#a9a9a9" stroke="#c9c9c9" stroke-width="0.600"/><path d="M304.7 264.84000000000003h5.200M307.3 262.24v5.200" stroke="#777" stroke-width="0.500"/><rect x="311.90000000000003" y="262.14000000000004" width="2.700" height="2.700" fill="#20b8e8"/><rect x="314.6" y="262.14000000000004" width="2.700" height="2.700" fill="#e83a9c"/><rect x="311.90000000000003" y="264.84000000000003" width="2.700" height="2.700" fill="#f2e530"/><rect x="314.6" y="264.84000000000003" width="2.700" height="2.700" fill="#222"/><rect x="240.3" y="272.15999999999997" width="5.2" height="5.2" fill="#2d7183" stroke="none" stroke-width="0.700"/><rect x="304.7" y="272.15999999999997" width="5.200" height="5.200" fill="#a9a9a9" stroke="#c9c9c9" stroke-width="0.600"/><path d="M304.7 274.76h5.200M307.3 272.15999999999997v5.200" stroke="#777" stroke-width="0.500"/><rect x="311.90000000000003" y="272.06" width="2.700" height="2.700" fill="#20b8e8"/><rect x="314.6" y="272.06" width="2.700" height="2.700" fill="#e83a9c"/><rect x="311.90000000000003" y="274.76" width="2.700" height="2.700" fill="#f2e530"/><rect x="314.6" y="274.76" width="2.700" height="2.700" fill="#222"/><rect x="240.3" y="282.08" width="5.2" height="5.2" fill="#c8c1b1" stroke="#e8e4da" stroke-width="0.700"/><rect x="304.7" y="282.08" width="5.200" height="5.200" fill="#a9a9a9" stroke="#c9c9c9" stroke-width="0.600"/><path d="M304.7 284.68h5.200M307.3 282.08v5.200" stroke="#777" stroke-width="0.500"/><rect x="311.90000000000003" y="281.98" width="2.700" height="2.700" fill="#20b8e8"/><rect x="314.6" y="281.98" width="2.700" height="2.700" fill="#e83a9c"/><rect x="311.90000000000003" y="284.68" width="2.700" height="2.700" fill="#f2e530"/><rect x="314.6" y="284.68" width="2.700" height="2.700" fill="#222"/><rect x="240.3" y="292.0" width="5.2" height="5.2" fill="#988d7d" stroke="none" stroke-width="0.700"/><rect x="304.7" y="292.0" width="5.200" height="5.200" fill="#a9a9a9" stroke="#c9c9c9" stroke-width="0.600"/><path d="M304.7 294.6h5.200M307.3 292.0v5.200" stroke="#777" stroke-width="0.500"/><rect x="311.90000000000003" y="291.90000000000003" width="2.700" height="2.700" fill="#20b8e8"/><rect x="314.6" y="291.90000000000003" width="2.700" height="2.700" fill="#e83a9c"/><rect x="311.90000000000003" y="294.6" width="2.700" height="2.700" fill="#f2e530"/><rect x="314.6" y="294.6" width="2.700" height="2.700" fill="#222"/><rect x="227.800" y="330.2" width="5.600" height="5.600" fill="#c4c4c4"/><rect x="230.400" y="332.7" width="2.400" height="2.400" fill="#333"/><rect x="228.500" y="330.8" width="2" height="2" fill="#535353"/><rect x="278.800" y="330.2" width="5" height="5" fill="#bcbcbc"/><path d="M278.800 332.7h5M281.300 330.2v5" stroke="#535353" stroke-width="0.600"/><path d="M284.300 335.6h1" stroke="#bcbcbc" stroke-width="0.900"/><path d="M291 330.2h2.400l0.800 0.900h3.300v4.700h-6.500z" fill="#bcbcbc"/><rect x="304.700" y="330.3" width="5.400" height="5.400" rx="0.800" fill="none" stroke="#bcbcbc" stroke-width="0.900"/><path d="M307.400 331.7v2.600M306.100 333h2.600" stroke="#bcbcbc" stroke-width="0.800"/><path d="M317.700 331.4h4.600l-0.500 4.400h-3.600z" fill="#adadad"/><path d="M317.200 330.8h5.600M319.300 330h1.400" stroke="#adadad" stroke-width="0.800"/></svg>
<div style="left:315px;top:62.5px;width:49px;height:33.5px;border:3px solid #f1b24f;"></div>
<div style="left:320.5px;top:96.8px;width:6.5px;height:1px;background:#8c8c8c;"></div>
</div>
<div class="pane" style="left:456px;top:0;width:444px;height:400px;"><div style="left:-456px;top:0;width:900px;height:400px;">
<div style="left:433px;top:76.6px;width:390px;height:234px;background:#c1bbad;"></div>
<svg style="left:0;top:0" width="900" height="400" viewBox="0 0 900 400" ><line x1="433" y1="76.800" x2="823" y2="76.800" stroke="#c98f8f" stroke-width="0.900"/><line x1="433" y1="310.400" x2="823" y2="310.400" stroke="#c98f8f" stroke-width="0.900"/>
<rect x="446" y="89.600" width="364" height="208" fill="none" stroke="#b0aa9c" stroke-width="1"/>
<rect x="459.300" y="102.700" width="338" height="182" fill="none" stroke="#d6bcc9" stroke-width="0.900"/>
<line x1="433" y1="76.600" x2="823" y2="310.600" stroke="#a0b8cd" stroke-width="0.700"/>
<line x1="433" y1="310.600" x2="823" y2="76.600" stroke="#a0b8cd" stroke-width="0.700"/>
<rect x="474.500" y="113" width="26" height="161" fill="none" stroke="#a8bfd2" stroke-width="0.650"/>
<rect x="605.600" y="157" width="159.400" height="26" fill="none" stroke="#a8bfd2" stroke-width="0.650"/>
<rect x="603" y="193.600" width="164.600" height="36.800" fill="none" stroke="#a8bfd2" stroke-width="0.650"/>
</svg>
<div style="left:611.6px;top:151px;width:147.5px;height:23.3px;background:#393c53;opacity:0.93;"></div>
<div id="nm" class="t" style="left:610.700px;top:152px;height:24px;line-height:24px;font-size:20.300px;font-weight:700;color:#e0a998;-webkit-text-stroke:0.700px #e0a998;letter-spacing:7.450px;transform-origin:0 50%;transform:scaleX(0.710);">ZACH BROWN</div>
<div id="em" class="t" style="left:603px;top:194.900px;width:164.600px;height:18px;line-height:18px;font-size:14.600px;font-weight:700;color:#0c0c0c;-webkit-text-stroke:0.350px #0c0c0c;text-align:center;"><span style="display:inline-block;transform:scaleX(0.680);">zb.barber@mail.com</span></div>
<div id="ct" class="t" style="left:603px;top:215.900px;width:164.600px;height:18px;line-height:18px;font-size:14.600px;font-weight:700;color:#0c0c0c;-webkit-text-stroke:0.350px #0c0c0c;text-align:center;"><span style="display:inline-block;transform:scaleX(0.680);">Austin, TX</span></div>
<div id="vt" class="t" style="left:477px;top:250px;height:14px;line-height:14px;font-size:14.500px;font-weight:700;color:#0a0a0a;-webkit-text-stroke:0.450px #0a0a0a;letter-spacing:4.950px;transform-origin:0 0;transform:rotate(-90deg) scaleX(0.780);">@ZB.BARBER</div>
<div style="left:770.7px;top:74px;width:4.5px;height:326px;background:#494949;"></div>
<div style="left:775px;top:0px;width:125px;height:400px;background:#535353;border-left:1px solid #474747;border-right:3px solid #5c5c5c;"></div>
<div class="t" style="left:781px;top:2.5px;font-size:6.6px;color:#e2e2e2;font-weight:700;line-height:10px;height:10px;white-space:nowrap;">문자</div>
<div class="sep" style="left:776px;top:15.5px;width:121px;height:1px;"></div>
<div class="t" style="left:781px;top:18.5px;font-size:6.6px;color:#e2e2e2;font-weight:700;line-height:10px;height:10px;white-space:nowrap;">텍스트 스타일</div>
<div style="left:780.5px;top:32.5px;width:107.5px;height:10.5px;border:1px solid #6a6a6a;border-radius:2.500px;overflow:hidden;background:#535353;"><div style="left:0;top:0;width:52.500px;height:9px;background:#2c2c2c;"></div><div style="left:52.500px;top:0;width:1px;height:9px;background:#6a6a6a;"></div></div>
<div class="t" style="left:781.5px;top:32.6px;font-size:6.6px;color:#4da2ee;font-weight:700;line-height:10px;height:10px;white-space:nowrap;width:52.5px;text-align:center;">단락 스타일</div>
<div class="t" style="left:834.5px;top:32.6px;font-size:6.6px;color:#e6e6e6;font-weight:700;line-height:10px;height:10px;white-space:nowrap;width:53px;text-align:center;">문자 스타일</div>
<div class="f" style="left:780.5px;top:47px;width:107.5px;height:15.7px;"></div>
<div style="left:783px;top:49.3px;width:12px;height:11.2px;background:#fff;border-radius:1px;"></div>
<div class="t" style="left:784.3px;top:49.8px;font-size:7px;color:#111;font-weight:700;line-height:10px;height:10px;white-space:nowrap;">Ag</div>
<div class="t" style="left:798px;top:50px;font-size:5.6px;color:#f0f0f0;font-weight:700;line-height:10px;height:10px;white-space:nowrap;">Titres+</div>
<div style="left:878.5px;top:47.5px;width:1px;height:14.7px;background:#606060;"></div>
<svg style="left:0;top:0" width="900" height="400" viewBox="0 0 900 400" ><path d="M881.9 54.2L883.5 55.96L885.1 54.2" fill="none" stroke="#d8d8d8" stroke-width="1" stroke-linecap="round" stroke-linejoin="round"/><path d="M785.300 68.800v5M786.800 68.800v5M787.300 68.800h-2.300a1.500 1.500 0 0 0 0 3h0.500" fill="none" stroke="#d2d2d2" stroke-width="0.800"/><circle cx="847.500" cy="71.300" r="2.500" fill="none" stroke="#d2d2d2" stroke-width="0.900"/><path d="M849.500 68.300l1.800-1.300M850.500 73.800h2" stroke="#d2d2d2" stroke-width="0.900"/><path d="M863 69.300h2.500l1 4M868.800 68.300l-3.300 5" fill="none" stroke="#d2d2d2" stroke-width="1"/><rect x="879.300" y="68.300" width="5.400" height="5.800" rx="0.800" fill="none" stroke="#d2d2d2" stroke-width="0.900"/><path d="M882 69.800v2.800M880.600 71.200h2.800" stroke="#d2d2d2" stroke-width="0.800"/></svg>
<div style="left:771px;top:74px;width:127.8px;height:168.3px;border:3px solid #f1b24f;"></div>
<div class="t" style="left:781px;top:84.5px;font-size:6.6px;color:#e2e2e2;font-weight:700;line-height:10px;height:10px;white-space:nowrap;">모양</div>
<div style="left:780px;top:97px;width:9.6px;height:9.6px;background:#fff;border-radius:0.500px;"></div>
<div class="t" style="left:780px;top:96px;font-size:9.5px;color:#2c6ea6;font-weight:700;line-height:11px;height:11px;white-space:nowrap;width:9.6px;font-family:&quot;Liberation Serif&quot;,serif;text-align:center;">T</div>
<div class="t" style="left:795px;top:97px;font-size:6.6px;color:#e2e2e2;font-weight:700;line-height:10px;height:10px;white-space:nowrap;">채우기</div>
<div style="left:780px;top:110.2px;width:9.6px;height:9.6px;background:#fff;border-radius:0.500px;"></div>
<div class="t" style="left:794.5px;top:110.6px;font-size:6.6px;color:#e2e2e2;font-weight:700;line-height:10px;height:10px;white-space:nowrap;text-decoration:underline;text-decoration-thickness:0.6px;text-underline-offset:1.3px;">획</div>
<div class="f" style="left:824px;top:110.5px;width:34.5px;height:10.3px;"></div>
<div style="left:832.5px;top:111px;width:1px;height:9.3px;background:#5e5e5e;"></div>
<div style="left:850px;top:111px;width:1px;height:9.3px;background:#5e5e5e;"></div>
<div class="t" style="left:835px;top:110.6px;font-size:5.6px;color:#f0f0f0;font-weight:700;line-height:10px;height:10px;white-space:nowrap;">0 pt</div>
<div style="left:861px;top:110.5px;width:27.5px;height:10.3px;background:#5f5f5f;border-radius:2px;"></div>
<div class="sep" style="left:776px;top:125.5px;width:120px;height:1px;"></div>
<div class="t" style="left:781px;top:129.5px;font-size:6.6px;color:#e2e2e2;font-weight:700;line-height:10px;height:10px;white-space:nowrap;">문자</div>
<div class="f" style="left:780px;top:142.5px;width:108.5px;height:10.3px;"></div>
<div style="left:878.5px;top:143px;width:1px;height:9.3px;background:#606060;"></div>
<div class="t" style="left:792px;top:142.6px;font-size:5.6px;color:#f0f0f0;font-weight:700;line-height:10px;height:10px;white-space:nowrap;">Gin</div>
<div class="f" style="left:780px;top:155.5px;width:108.5px;height:10.3px;"></div>
<div style="left:878.5px;top:156px;width:1px;height:9.3px;background:#606060;"></div>
<div class="t" style="left:783px;top:155.6px;font-size:5.6px;color:#f0f0f0;font-weight:700;line-height:10px;height:10px;white-space:nowrap;">Regular</div>
<div class="f" style="left:792px;top:168.5px;width:38.5px;height:10.3px;"></div>
<div style="left:800px;top:169px;width:1px;height:9.3px;background:#5e5e5e;"></div>
<div style="left:821.5px;top:169px;width:1px;height:9.3px;background:#5e5e5e;"></div>
<div class="t" style="left:802.5px;top:168.6px;font-size:5.6px;color:#f0f0f0;font-weight:700;line-height:10px;height:10px;white-space:nowrap;">13 pt</div>
<div class="f" style="left:849px;top:168.5px;width:39.5px;height:10.3px;"></div>
<div style="left:857.5px;top:169px;width:1px;height:9.3px;background:#5e5e5e;"></div>
<div style="left:879px;top:169px;width:1px;height:9.3px;background:#5e5e5e;"></div>
<div class="t" style="left:859px;top:168.6px;font-size:5.4px;color:#f0f0f0;font-weight:700;line-height:10px;height:10px;white-space:nowrap;">(15.6 pt</div>
<div class="f" style="left:792px;top:181px;width:38.5px;height:10.3px;"></div>
<div style="left:800px;top:181.5px;width:1px;height:9.3px;background:#5e5e5e;"></div>
<div style="left:821.5px;top:181.5px;width:1px;height:9.3px;background:#5e5e5e;"></div>
<div class="t" style="left:802.5px;top:181px;font-size:5.8px;color:#f0f0f0;font-weight:700;line-height:10px;height:10px;white-space:nowrap;">시각적</div>
<div class="f" style="left:849px;top:181px;width:39.5px;height:10.3px;"></div>
<div style="left:857.5px;top:181.5px;width:1px;height:9.3px;background:#5e5e5e;"></div>
<div style="left:879px;top:181.5px;width:1px;height:9.3px;background:#5e5e5e;"></div>
<div class="t" style="left:859.5px;top:181.1px;font-size:5.6px;color:#f0f0f0;font-weight:700;line-height:10px;height:10px;white-space:nowrap;">300</div>
<div class="t" style="left:779.5px;top:168.5px;font-size:10px;color:#dedede;font-weight:700;line-height:10px;height:10px;white-space:nowrap;font-family:&quot;Liberation Serif&quot;,serif;letter-spacing:-0.500px;"><span style="font-size:6px">T</span>T</div>
<div class="t" style="left:780px;top:182px;font-size:7.5px;color:#c9c9c9;font-weight:400;line-height:10px;height:10px;white-space:nowrap;">V</div>
<div class="t" style="left:783.7px;top:183.5px;font-size:7.5px;color:#c9c9c9;font-weight:400;line-height:10px;height:10px;white-space:nowrap;">A</div>
<div class="t" style="left:839.5px;top:170px;font-size:8px;color:#dedede;font-weight:700;line-height:10px;height:10px;white-space:nowrap;font-family:&quot;Liberation Serif&quot;,serif;">A</div>
<div class="t" style="left:838.3px;top:180.2px;font-size:6.3px;color:#e6e6e6;font-weight:700;line-height:10px;height:10px;white-space:nowrap;letter-spacing:-0.600px;">VA</div>
<div style="left:793px;top:222px;width:9.6px;height:11px;background:#2a2a2a;border-radius:1.500px;"></div>
<svg style="left:0;top:0" width="900" height="400" viewBox="0 0 900 400" ><path d="M780.500 119.500l8.600-8.600" stroke="#e0121c" stroke-width="1.300"/><path d="M826.8 114.3L828.3 112.8L829.8 114.3M826.8 116.89999999999999L828.3 118.39999999999999L829.8 116.89999999999999" fill="none" stroke="#d8d8d8" stroke-width="0.9" stroke-linecap="round" stroke-linejoin="round"/><path d="M852.9 114.8L854.5 116.55999999999999L856.1 114.8" fill="none" stroke="#d8d8d8" stroke-width="1" stroke-linecap="round" stroke-linejoin="round"/><path d="M881.9 114.8L883.5 116.55999999999999L885.1 114.8" fill="none" stroke="#9a9a9a" stroke-width="1" stroke-linecap="round" stroke-linejoin="round"/><circle cx="785.300" cy="147" r="1.900" fill="none" stroke="#cfcfcf" stroke-width="0.800"/><path d="M786.700 148.500l1.500 1.600" stroke="#cfcfcf" stroke-width="0.900"/><path d="M789 147.0L790 148.1L791 147.0" fill="none" stroke="#cfcfcf" stroke-width="0.7" stroke-linecap="round" stroke-linejoin="round"/><path d="M881.9 146.79999999999998L883.5 148.56L885.1 146.79999999999998" fill="none" stroke="#d8d8d8" stroke-width="1" stroke-linecap="round" stroke-linejoin="round"/><path d="M881.9 159.79999999999998L883.5 161.56L885.1 159.79999999999998" fill="none" stroke="#d8d8d8" stroke-width="1" stroke-linecap="round" stroke-linejoin="round"/><path d="M794.8 172.29999999999998L796.3 170.79999999999998L797.8 172.29999999999998M794.8 174.9L796.3 176.4L797.8 174.9" fill="none" stroke="#d8d8d8" stroke-width="0.9" stroke-linecap="round" stroke-linejoin="round"/><path d="M824.4 172.79999999999998L826 174.56L827.6 172.79999999999998" fill="none" stroke="#d8d8d8" stroke-width="1" stroke-linecap="round" stroke-linejoin="round"/><path d="M851.8 172.29999999999998L853.3 170.79999999999998L854.8 172.29999999999998M851.8 174.9L853.3 176.4L854.8 174.9" fill="none" stroke="#d8d8d8" stroke-width="0.9" stroke-linecap="round" stroke-linejoin="round"/><path d="M882.4 172.79999999999998L884 174.56L885.6 172.79999999999998" fill="none" stroke="#d8d8d8" stroke-width="1" stroke-linecap="round" stroke-linejoin="round"/><path d="M794.8 184.89999999999998L796.3 183.39999999999998L797.8 184.89999999999998M794.8 187.5L796.3 189.0L797.8 187.5" fill="none" stroke="#8a8a8a" stroke-width="0.9" stroke-linecap="round" stroke-linejoin="round"/><path d="M824.4 185.39999999999998L826 187.16L827.6 185.39999999999998" fill="none" stroke="#d8d8d8" stroke-width="1" stroke-linecap="round" stroke-linejoin="round"/><path d="M851.8 184.89999999999998L853.3 183.39999999999998L854.8 184.89999999999998M851.8 187.5L853.3 189.0L854.8 187.5" fill="none" stroke="#d8d8d8" stroke-width="0.9" stroke-linecap="round" stroke-linejoin="round"/><path d="M882.4 185.39999999999998L884 187.16L885.6 185.39999999999998" fill="none" stroke="#d8d8d8" stroke-width="1" stroke-linecap="round" stroke-linejoin="round"/><path d="M838 170v7.500M837 171l1-1.200 1 1.200M837 176.500l1 1.200 1-1.200" fill="none" stroke="#dedede" stroke-width="0.700"/><path d="M840 178.300h6.500" stroke="#dedede" stroke-width="0.600"/><rect x="837.500" y="181.800" width="8.800" height="6.400" fill="none" stroke="#e6e6e6" stroke-width="0.700"/><path d="M838 190.300h8M838 189.500v1.600M846 189.500v1.600" stroke="#e6e6e6" stroke-width="0.700"/><path d="M787 190l2.500-1" stroke="#c9c9c9" stroke-width="0.700"/><circle cx="886.2" cy="198.5" r="1.1" fill="#ececec"/><circle cx="889.0" cy="198.5" r="1.1" fill="#ececec"/><circle cx="891.8000000000001" cy="198.5" r="1.1" fill="#ececec"/><path d="M781.7 225.2h7.6" stroke="#8e8e8e" stroke-width="1.500"/><path d="M781.7 227.5h5" stroke="#8e8e8e" stroke-width="1.500"/><path d="M781.7 229.8h7.6" stroke="#8e8e8e" stroke-width="1.500"/><path d="M794.0 225.2h7.6" stroke="#8e8e8e" stroke-width="1.500"/><path d="M795.3 227.5h5" stroke="#8e8e8e" stroke-width="1.500"/><path d="M794.0 229.8h7.6" stroke="#8e8e8e" stroke-width="1.500"/><path d="M805.2 225.2h7.6" stroke="#8e8e8e" stroke-width="1.500"/><path d="M807.8 227.5h5" stroke="#8e8e8e" stroke-width="1.500"/><path d="M805.2 229.8h7.6" stroke="#8e8e8e" stroke-width="1.500"/><path d="M818.7 225.2h7.6" stroke="#8e8e8e" stroke-width="1.500"/><path d="M818.7 227.5h7.6" stroke="#8e8e8e" stroke-width="1.500"/><path d="M818.7 229.8h4.5" stroke="#8e8e8e" stroke-width="1.500"/><path d="M829.7 225.2h7.6" stroke="#8e8e8e" stroke-width="1.500"/><path d="M829.7 227.5h7.6" stroke="#8e8e8e" stroke-width="1.500"/><path d="M831.2 229.8h4.5" stroke="#8e8e8e" stroke-width="1.500"/><path d="M842.2 225.2h7.6" stroke="#8e8e8e" stroke-width="1.500"/><path d="M842.2 227.5h7.6" stroke="#8e8e8e" stroke-width="1.500"/><path d="M845.3 229.8h4.5" stroke="#8e8e8e" stroke-width="1.500"/><path d="M853.7 225.2h7.6" stroke="#8e8e8e" stroke-width="1.500"/><path d="M853.7 227.5h7.6" stroke="#8e8e8e" stroke-width="1.500"/><path d="M853.7 229.8h7.6" stroke="#8e8e8e" stroke-width="1.500"/><path d="M866.7 225.2h6" stroke="#8e8e8e" stroke-width="1.500"/><path d="M866.7 227.5h6" stroke="#8e8e8e" stroke-width="1.500"/><path d="M866.7 229.8h6" stroke="#8e8e8e" stroke-width="1.500"/><path d="M874.0 223.9v7.200" stroke="#8e8e8e" stroke-width="0.900"/><path d="M880.3 225.2h6" stroke="#8e8e8e" stroke-width="1.500"/><path d="M880.3 227.5h6" stroke="#8e8e8e" stroke-width="1.500"/><path d="M880.3 229.8h6" stroke="#8e8e8e" stroke-width="1.500"/><path d="M879.0 223.9v7.200" stroke="#8e8e8e" stroke-width="0.900"/><circle cx="783" cy="268.300" r="0.900" fill="#f0f0f0"/><circle cx="783" cy="272" r="0.900" fill="#f0f0f0"/><path d="M785 267.500h4.500M785 269h4.500M785 271.200h4.500M785 272.700h4.500" stroke="#9a9a9a" stroke-width="0.700"/><path d="M800.500 267.500h4.500M800.500 269h4.500M800.500 271.200h4.500M800.500 272.700h4.500" stroke="#9a9a9a" stroke-width="0.700"/></svg>
<div class="t" style="left:797.5px;top:263.2px;font-size:4px;color:#d8d8d8;font-weight:700;line-height:10px;height:10px;white-space:nowrap;">1</div>
<div class="t" style="left:797.5px;top:266.9px;font-size:4px;color:#d8d8d8;font-weight:700;line-height:10px;height:10px;white-space:nowrap;">2</div>
<div class="sep" style="left:776px;top:205.4px;width:120px;height:1px;"></div>
<div class="t" style="left:781px;top:208.5px;font-size:6.6px;color:#e2e2e2;font-weight:700;line-height:10px;height:10px;white-space:nowrap;">단락</div>
<div class="t" style="left:781px;top:250.5px;font-size:6.6px;color:#e2e2e2;font-weight:700;line-height:10px;height:10px;white-space:nowrap;">글머리 기호 및 번호 매기기</div>
<div class="btn" style="left:856px;top:264px;width:32.5px;height:10.5px;line-height:8.3px;">옵션</div>
<div class="sep" style="left:776px;top:279px;width:121px;height:1px;"></div>
<div class="t" style="left:781px;top:279.8px;font-size:6.6px;color:#e2e2e2;font-weight:700;line-height:10px;height:10px;white-space:nowrap;">빠른 작업</div>
<div class="btn" style="left:780px;top:292px;width:52px;height:10.7px;line-height:8.5px;">대소문자 변경</div>
<div class="btn" style="left:836px;top:292px;width:52.5px;height:10.7px;line-height:8.5px;">새 하이퍼링크</div>
<div class="btn" style="left:780px;top:308px;width:52px;height:10.7px;line-height:8.5px;">각주 삽입</div>
<div class="btn" style="left:836px;top:308px;width:52.5px;height:10.7px;line-height:8.5px;">미주 삽입</div>
<div class="btn" style="padding-left:4px;left:780px;top:323.4px;width:108.5px;height:10.6px;line-height:8.399999999999999px;">자리표시자 텍스트로 채우기</div>
</div></div>
</body></html>
